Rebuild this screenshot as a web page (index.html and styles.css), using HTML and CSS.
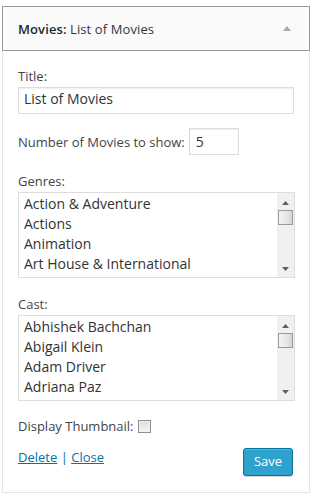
FILE: index.html
```html
<!DOCTYPE html>
<html>
<head>
<meta charset="utf-8">
<link rel="stylesheet" href="styles.css">
</head>
<body>
<div class="widget">
  <div class="widget-top">
    <div class="widget-title"><strong>Movies:</strong> <span class="in-title">List of Movies</span></div>
    <span class="toggle"></span>
  </div>
  <div class="widget-inside">
    <div class="label lbl-title">Title:</div>
    <div class="input wide">List of Movies</div>

    <div class="num-row">
      <span class="label">Number of Movies to show:</span>
      <div class="input num">5</div>
    </div>

    <div class="label lbl-gap">Genres:</div>
    <div class="select">
      <div class="options">
        <div class="opt">Action &amp; Adventure</div>
        <div class="opt">Actions</div>
        <div class="opt">Animation</div>
        <div class="opt">Art House &amp; International</div>
      </div>
      <div class="scrollbar">
        <svg class="arrow" width="7" height="4" viewBox="0 0 7 4"><path d="M0 4 L3.5 0 L7 4 Z" fill="#606060"/></svg>
        <div class="thumb"></div>
        <div class="spacer"></div>
        <svg class="arrow" width="7" height="4" viewBox="0 0 7 4"><path d="M0 0 L7 0 L3.5 4 Z" fill="#606060"/></svg>
      </div>
    </div>

    <div class="label lbl-gap">Cast:</div>
    <div class="select">
      <div class="options">
        <div class="opt">Abhishek Bachchan</div>
        <div class="opt">Abigail Klein</div>
        <div class="opt">Adam Driver</div>
        <div class="opt">Adriana Paz</div>
      </div>
      <div class="scrollbar">
        <svg class="arrow" width="7" height="4" viewBox="0 0 7 4"><path d="M0 4 L3.5 0 L7 4 Z" fill="#606060"/></svg>
        <div class="thumb"></div>
        <div class="spacer"></div>
        <svg class="arrow" width="7" height="4" viewBox="0 0 7 4"><path d="M0 0 L7 0 L3.5 4 Z" fill="#606060"/></svg>
      </div>
    </div>

    <div class="label lbl-gap thumb-row">Display Thumbnail: <span class="checkbox"></span></div>

    <div class="controls">
      <div class="links"><a href="#">Delete</a> <span class="sep">|</span> <a href="#">Close</a></div>
      <div class="button">Save</div>
    </div>
  </div>
</div>
</body>
</html>
```

FILE: styles.css
```css
html, body {
  margin: 0;
  padding: 0;
  background: #fff;
}
body {
  font-family: "Open Sans", "Liberation Sans", sans-serif;
  font-size: 13px;
  color: #444;
}
.widget {
  width: 308px;
  margin: 6px 0 0 2px;
}
.widget-top {
  height: 43px;
  border: 1px solid #999;
  background: #fafafa;
  display: flex;
  align-items: center;
  justify-content: space-between;
  padding: 0 15px;
}
.widget-title {
  font-size: 13px;
  line-height: 18px;
  color: #23282d;
  padding-top: 1px;
  letter-spacing: 0.1px;
}
.widget-title strong {
  font-weight: 600;
}
.in-title {
  color: #32373c;
}
.toggle {
  width: 0;
  height: 0;
  border-left: 4px solid transparent;
  border-right: 4px solid transparent;
  border-bottom: 5px solid #aaa;
  margin-right: 3px;
}
.widget-inside {
  border: 1px solid #e5e5e5;
  border-top: none;
  padding: 16px 15px 16px;
  background: #fff;
}
.label {
  line-height: 18px;
  color: #444;
}
.input {
  box-sizing: border-box;
  border: 1px solid #ddd;
  box-shadow: inset 0 1px 2px rgba(0,0,0,.07);
  background: #fff;
  color: #333;
  font-size: 14px;
  height: 27px;
  padding: 0 5px 4px;
  line-height: 21px;
}
.wide {
  width: 276px;
  margin-top: 2px;
}
.num-row {
  display: flex;
  align-items: center;
  margin-top: 14px;
  gap: 4px;
}
.num {
  width: 50px;
  padding: 2px 6px 0;
  line-height: 21px;
}
.lbl-gap {
  margin-top: 17px;
}
.select {
  box-sizing: border-box;
  width: 277px;
  height: 86px;
  margin-top: 2px;
  border: 1px solid #ddd;
  display: flex;
  background: #fff;
  overflow: hidden;
}
.options {
  flex: 1;
  padding: 1px 5px 0;
  font-size: 14px;
  line-height: 20px;
  color: #333;
  white-space: nowrap;
  overflow: hidden;
}
.scrollbar {
  width: 17px;
  background: #f0f0f0;
  display: flex;
  flex-direction: column;
  align-items: center;
  padding: 8px 0 6px;
  box-sizing: border-box;
}
.arrow {
  display: block;
  flex: none;
}
.thumb {
  box-sizing: border-box;
  width: 15px;
  height: 15px;
  margin-top: 5px;
  border: 1px solid #9a9a9a;
  background: linear-gradient(to right, #f4f4f4, #e6e6e6 60%, #d4d4d4);
  flex: none;
}
.spacer {
  flex: 1;
}
.thumb-row {
  display: flex;
  align-items: center;
  gap: 4px;
  margin-top: 16px;
}
.checkbox {
  box-sizing: border-box;
  width: 13px;
  height: 13px;
  border: 1px solid #8f8f8f;
  background: linear-gradient(#dcdcdc, #f6f6f6);
  box-shadow: inset 0 0 0 1px #f0f0f0;
  margin-top: 1px;
}
.controls {
  display: flex;
  justify-content: space-between;
  align-items: flex-start;
  margin-top: 13px;
}
.links {
  line-height: 18px;
  color: #0074a2;
}
.links a {
  color: #0074a2;
  text-decoration: underline;
}
.sep {
  color: #0074a2;
}
.button {
  box-sizing: border-box;
  width: 50px;
  height: 28px;
  margin-right: 1px;
  background: #2ea2cc;
  border: 1px solid #0074a2;
  border-radius: 3px;
  box-shadow: inset 0 1px 0 rgba(120,200,230,.5), 0 1px 0 rgba(0,0,0,.15);
  color: #fff;
  text-align: center;
  line-height: 25px;
  font-size: 13px;
}
```
